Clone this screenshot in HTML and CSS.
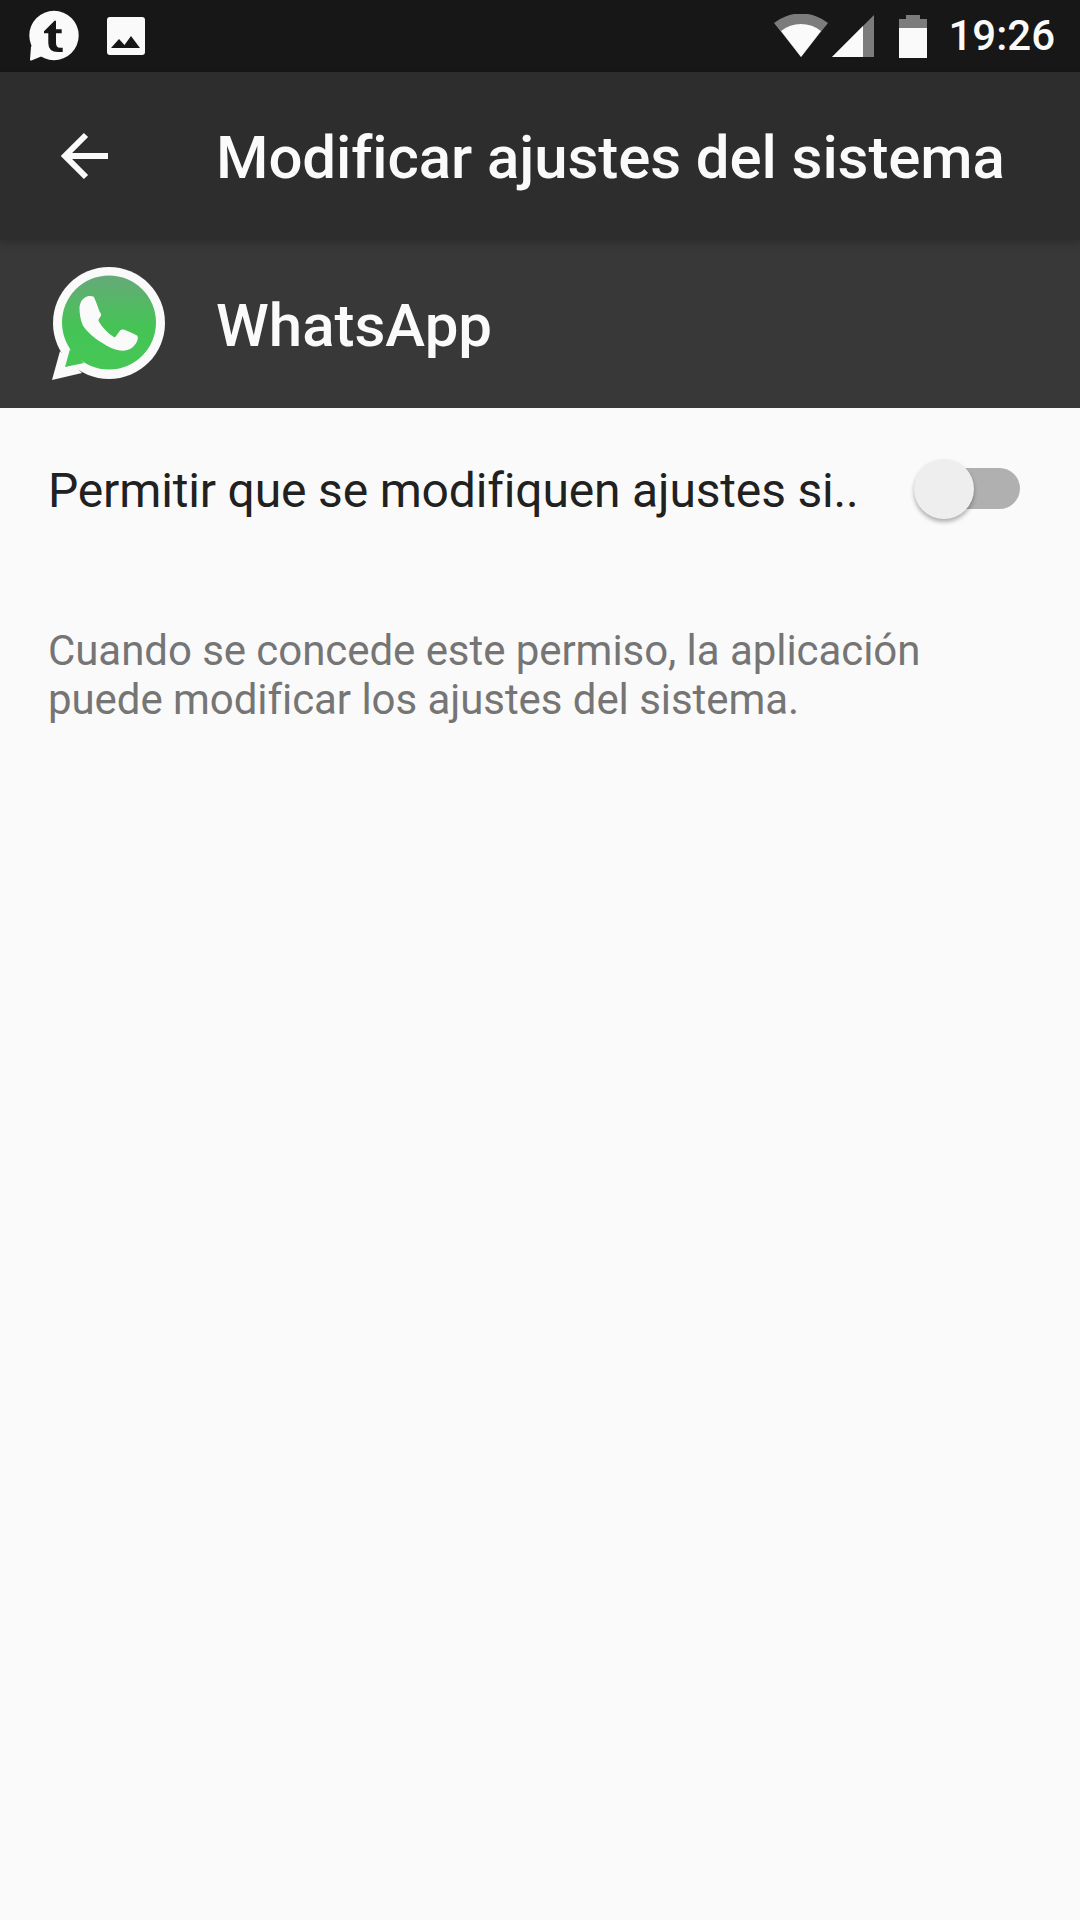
FILE: index.html
```html
<!DOCTYPE html>
<html lang="es">
<head>
	<meta charset="utf-8">
	<title>Modificar ajustes del sistema</title>
	<link rel="stylesheet" href="styles.css">
</head>
<body>
	<div class="status-bar">
		<svg class="icon-tapatalk" width="52" height="52" viewBox="0 0 52 52">
			<circle cx="27" cy="26.500" r="24.700" fill="#fafafa"/>
			<path d="M4 50.500 L5 38 L15 46 Z" fill="#fafafa" stroke="#fafafa" stroke-linejoin="round" stroke-width="2"/>
			<!-- the t of the logo -->
			<path d="M17 24.300 L17 22.300 L27.500 11.700 L29 11.700 L29 20.300 L34.700 20.300 L34.700 24.300 L29 24.300 L29 34 Q29 38.700 33 38.700 L35.700 38.700 L35.700 43 L31 43 Q21.300 43 21.300 34 L21.300 24.300 Z" fill="#171717"/>
		</svg>
		<svg class="icon-image" width="38" height="38" viewBox="0 0 38 38">
			<rect width="38" height="38" rx="3" fill="#fafafa"/>
			<path d="M4 31 L12 22 L17.500 28 L24 19 L33 31 Z" fill="#171717"/>
		</svg>
		<div class="status-right">
			<svg class="icon-wifi" width="54" height="44" viewBox="0 0 54 44">
				<path d="M27 43 L0 9 A43 43 0 0 1 54 9 Z" fill="#7c7c7c"/>
				<path d="M27 43 L7 17 A32 32 0 0 1 47 17 Z" fill="#fafafa"/>
			</svg>
			<svg class="icon-signal" width="42" height="42" viewBox="0 0 42 42">
				<path d="M0 42 L42 0 L42 42 Z" fill="#7c7c7c"/>
				<path d="M0 42 L31 11 L31 42 Z" fill="#fafafa"/>
			</svg>
			<svg class="icon-battery" width="28" height="43" viewBox="0 0 28 43">
				<path d="M7 0 H21 V4 H28 V13 H0 V4 H7 Z" fill="#7c7c7c"/>
				<rect y="13" width="28" height="30" fill="#fafafa"/>
			</svg>
			<span class="clock">19:26</span>
		</div>
	</div>

	<div class="toolbar">
		<svg class="icon-back" width="48" height="48" viewBox="0 0 48 48">
			<path d="M47 24 H4 M25 3 L4 24 L25 45" fill="none" stroke="#fafafa" stroke-width="6"/>
		</svg>
		<h1 class="title">Modificar ajustes del sistema</h1>
	</div>

	<div class="app-header">
		<svg class="icon-whatsapp" width="114" height="114" viewBox="0 0 114 114">
			<defs>
				<linearGradient id="waGreen" x1="0" y1="0" x2="0" y2="1">
					<stop offset="0" stop-color="#66a979"/>
					<stop offset="0.55" stop-color="#45c455"/>
					<stop offset="1" stop-color="#45c755"/>
				</linearGradient>
			</defs>
			<circle cx="57" cy="56" r="56" fill="#fafafa"/>
			<path d="M0 113 L8 84 L30 106 Z" fill="#fafafa"/>
			<circle cx="57" cy="55.500" r="47" fill="url(#waGreen)"/>
			<path d="M13 100 L18 82 L32 96 Z" fill="#45c755"/>
			<path d="M35.800 29.200 C30.500 30.500 27.500 36 27.500 41.300 C27.500 47 28.500 53 30.800 58.300 C35.500 65.500 42.500 71.500 49.200 75.200 C55.500 79.500 62 82.500 68 83.500 C73 84 77.500 83 80 80.800 C83.500 78 85.500 74.500 85.800 71.300 C86 70 85.500 69 85 68.600 C80.300 66 76.300 64 71.500 62.500 C70 62.300 69 62.500 68.300 63.300 L63.700 69.500 C63 70.300 62 70.300 61.500 69.800 C55.500 66 50.500 60.800 46.800 54.500 C46.500 53.500 46.500 52.500 47 51.800 L49 48.800 C49.500 47 48.500 46 47.500 44.500 C46 40 44 35 41.800 29.800 C40.300 29 38 29 35.800 29.200 Z" fill="#fafafa"/>
		</svg>
		<span class="app-name">WhatsApp</span>
	</div>

	<div class="content">
		<div class="setting-row">
			<span class="setting-label">Permitir que se modifiquen ajustes si..</span>
			<div class="switch">
				<div class="switch-thumb"></div>
			</div>
		</div>
		<p class="setting-desc">Cuando se concede este permiso, la aplicación puede modificar los ajustes del sistema.</p>
	</div>
</body>
</html>
```

FILE: styles.css
```css
html, body {
	margin: 0;
	padding: 0;
}
body {
	width: 1080px;
	height: 1920px;
	overflow: hidden;
	background: #fafafa;
	font-family: Roboto, "Noto Sans", sans-serif;
	display: flex;
	flex-direction: column;
}

/* status bar */
.status-bar {
	height: 72px;
	flex: none;
	background: #171717;
	display: flex;
	align-items: center;
	padding-left: 27px;
	padding-right: 25px;
}
.icon-tapatalk {
	margin-top: -2px;
}
.icon-image {
	margin-left: 28px;
}
.status-right {
	margin-left: auto;
	display: flex;
	align-items: center;
}
.icon-signal {
	margin-left: 4px;
}
.icon-battery {
	margin-left: 25px;
}
.clock {
	margin-left: 21px;
	color: #fafafa;
	font-size: 42px;
	font-weight: 500;
	line-height: 72px;
}

/* toolbar */
.toolbar {
	height: 168px;
	flex: none;
	background: #2d2d2d;
	display: flex;
	align-items: center;
	padding-left: 61px;
	box-shadow: 0 4px 8px rgba(0, 0, 0, 0.18);
	position: relative;
}
.title {
	margin: 2px 0 0 107px;
	color: #fafafa;
	font-size: 60px;
	font-weight: 500;
	letter-spacing: -0.09px;
}

/* app header */
.app-header {
	height: 168px;
	flex: none;
	background: #383838;
	display: flex;
	align-items: center;
	padding-left: 52px;
}
.app-name {
	margin: 2px 0 0 50px;
	color: #fafafa;
	font-size: 60px;
	font-weight: 500;
}

/* content */
.content {
	flex: 1;
	padding: 0 48px;
}
.setting-row {
	display: flex;
	align-items: center;
	height: 162px;
}
.setting-label {
	margin-top: 2px;
	color: #212121;
	font-size: 48px;
	letter-spacing: -0.16px;
}
.switch {
	margin-left: auto;
	margin-right: 12px;
	margin-top: -2px;
	width: 104px;
	height: 41px;
	border-radius: 21px;
	background: #b0b0b0;
	position: relative;
}
.switch-thumb {
	position: absolute;
	left: -2px;
	top: -9px;
	width: 60px;
	height: 60px;
	border-radius: 50%;
	background: #eeeeee;
	box-shadow: 0 3px 4px rgba(0, 0, 0, 0.3);
}
.setting-desc {
	margin: 56px 0 0;
	width: 940px;
	color: #757575;
	font-size: 42px;
	line-height: 49px;
	letter-spacing: -0.06px;
}
```
